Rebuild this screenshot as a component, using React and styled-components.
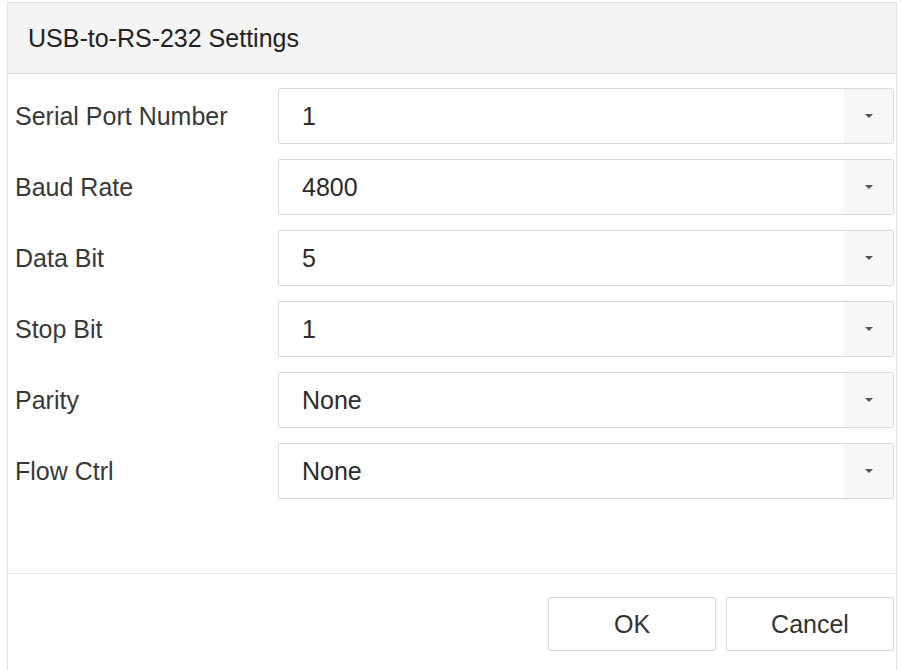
import React, { useState } from "react";
import styled, { createGlobalStyle } from "styled-components";

const GlobalStyle = createGlobalStyle`
  html, body {
    margin: 0;
    padding: 0;
    background: #fff;
  }
  body {
    font-family: "Liberation Sans", Arial, sans-serif;
  }
`;

const Panel = styled.div`
  box-sizing: border-box;
  margin: 2px 0 0 7px;
  width: 890px;
  height: 668px;
  border: 1px solid #e4e4e4;
  border-bottom: none;
  display: flex;
  flex-direction: column;
  background: #fff;
`;

const Header = styled.div`
  height: 70px;
  display: flex;
  align-items: center;
  padding-left: 20px;
  background: #f4f4f4;
  border-bottom: 1px solid #dedede;
  font-size: 25px;
  color: #222;
`;

const Form = styled.div`
  display: flex;
  flex-direction: column;
  gap: 15px;
  padding: 14px 2px 0 7px;
  flex: 1;
`;

const Row = styled.div`
  display: flex;
  align-items: center;
  height: 56px;
`;

const Label = styled.div`
  width: 263px;
  font-size: 25px;
  color: #383838;
`;

const Select = styled.div`
  box-sizing: border-box;
  flex: 1;
  height: 56px;
  display: flex;
  border: 1px solid #dadada;
  border-radius: 2px;
  background: #fff;
  cursor: pointer;
`;

const Value = styled.div`
  flex: 1;
  display: flex;
  align-items: center;
  padding-left: 23px;
  font-size: 25px;
  color: #2b2b2b;
`;

const Arrow = styled.div`
  width: 49px;
  display: flex;
  align-items: center;
  justify-content: center;
  background: #f7f7f7;

  &::after {
    content: "";
    border-left: 4px solid transparent;
    border-right: 4px solid transparent;
    border-top: 4px solid #555;
  }
`;

const Footer = styled.div`
  box-sizing: border-box;
  height: 97px;
  border-top: 1px solid #e8e8e8;
  display: flex;
  justify-content: flex-end;
  align-items: flex-start;
  gap: 10px;
  padding: 23px 2px 0 0;
`;

const Button = styled.button`
  box-sizing: border-box;
  width: 168px;
  height: 54px;
  border: 1px solid #d8d8d8;
  border-radius: 2px;
  background: #fff;
  font-family: "Liberation Sans", Arial, sans-serif;
  font-size: 25px;
  color: #333;
  cursor: pointer;
`;

const fields = [
  { label: "Serial Port Number", value: "1" },
  { label: "Baud Rate", value: "4800" },
  { label: "Data Bit", value: "5" },
  { label: "Stop Bit", value: "1" },
  { label: "Parity", value: "None" },
  { label: "Flow Ctrl", value: "None" },
];

export default function App() {
  const [values] = useState(fields);

  return (
    <>
      <GlobalStyle />
      <Panel>
        <Header>USB-to-RS-232 Settings</Header>
        <Form>
          {values.map((f) => (
            <Row key={f.label}>
              <Label>{f.label}</Label>
              <Select>
                <Value>{f.value}</Value>
                <Arrow />
              </Select>
            </Row>
          ))}
        </Form>
        <Footer>
          <Button>OK</Button>
          <Button>Cancel</Button>
        </Footer>
      </Panel>
    </>
  );
}
